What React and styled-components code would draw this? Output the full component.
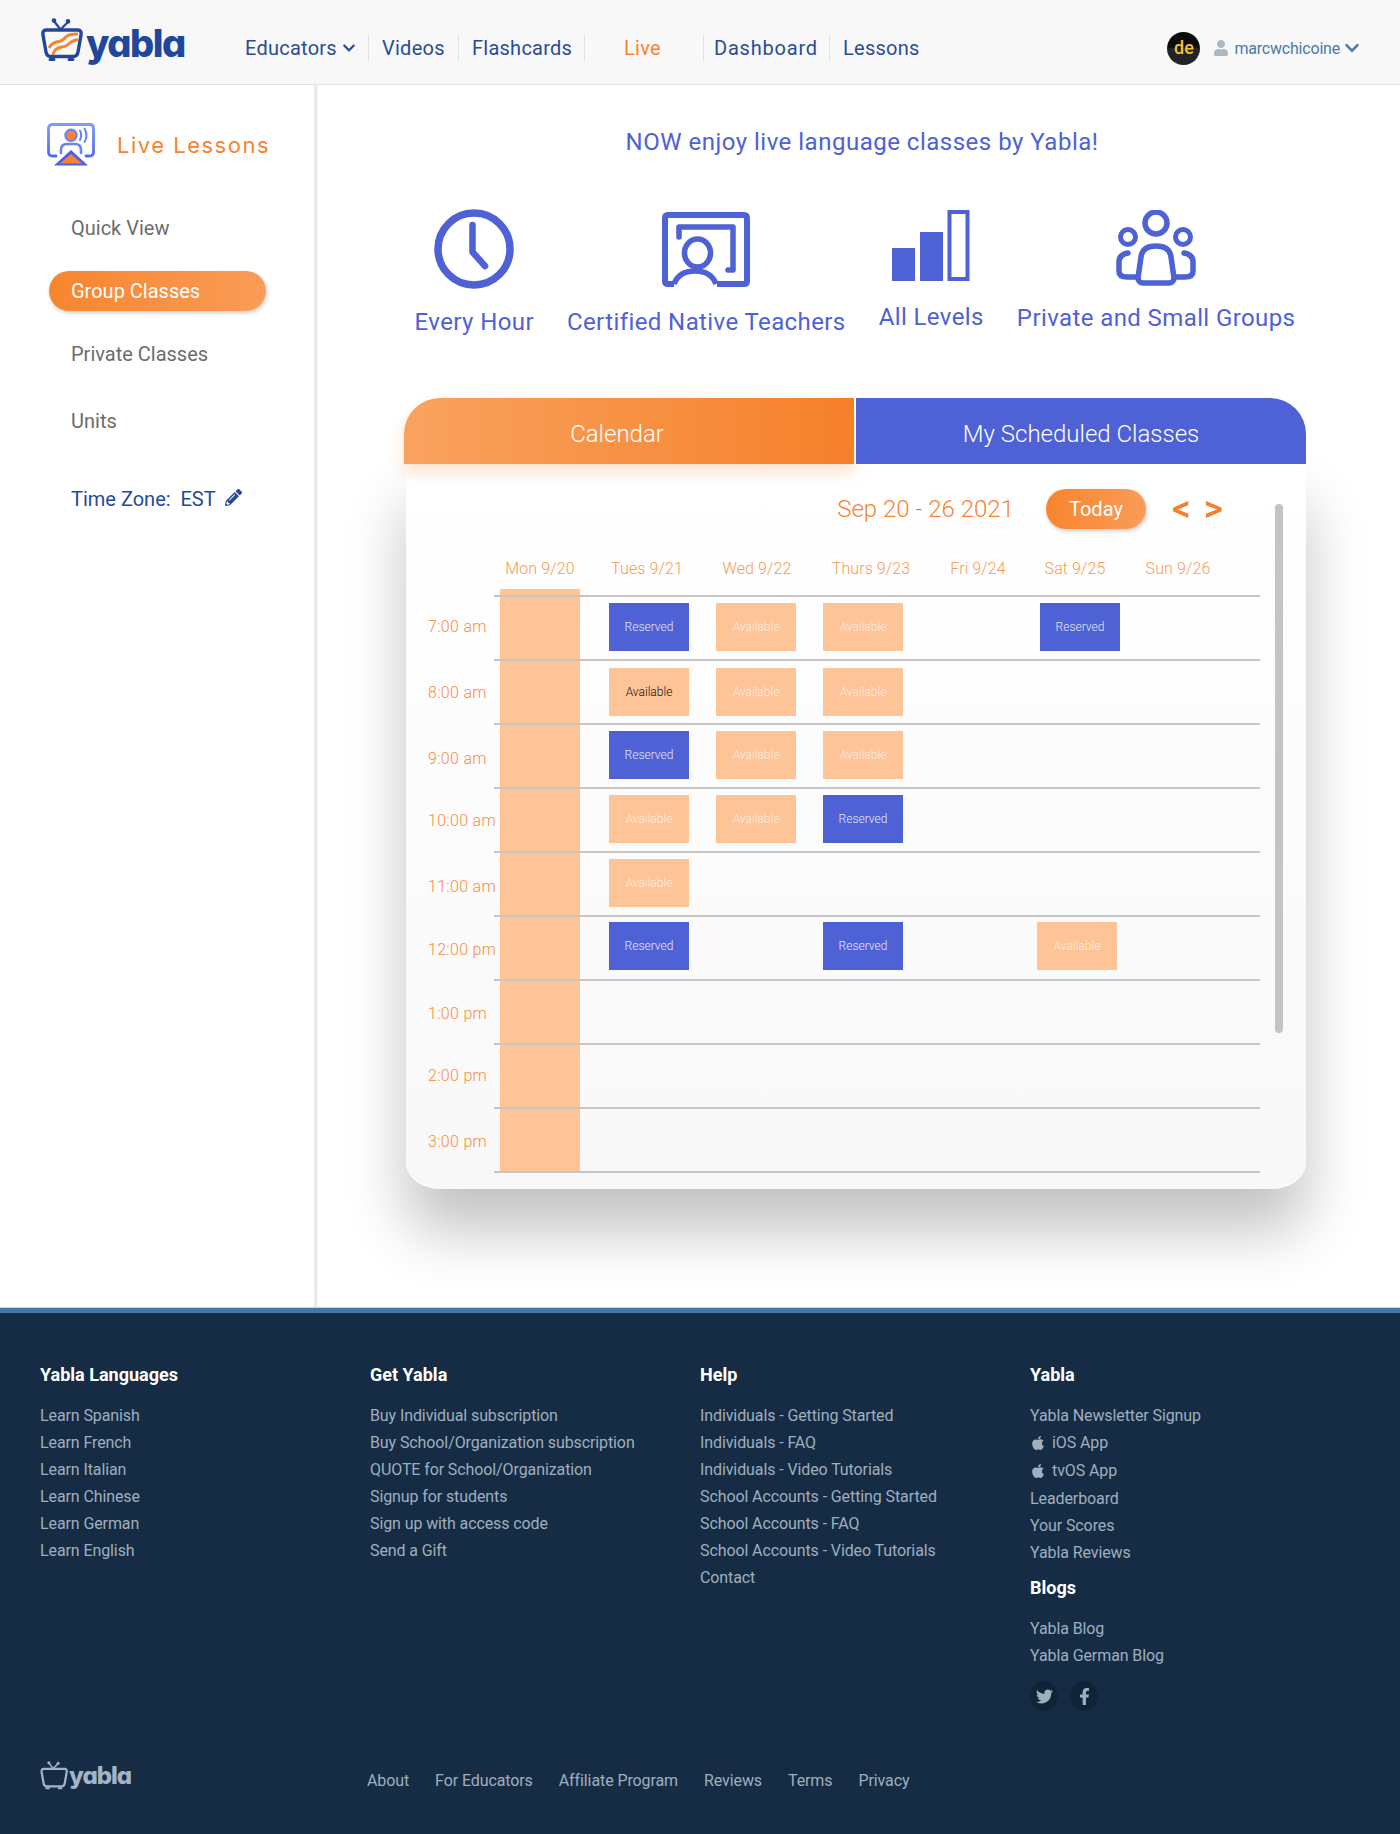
import React from 'react'
import styled, { createGlobalStyle } from 'styled-components'
import { FaApple, FaChevronDown, FaFacebookF, FaPencilAlt, FaTwitter, FaUser } from 'react-icons/fa'

const ORANGE = '#f98231'
const PEACH = '#fec397'
const INDIGO = '#4e61d5'
const NAVY = '#21479b'

const rows = [
    { time: '7:00 am', top: 20, cells: { tue: 'r', wed: 'a', thu: 'a', sat: 'r' } },
    { time: '8:00 am', top: 21, pad: 7, cells: { tue: 'k', wed: 'a', thu: 'a' } },
    { time: '9:00 am', top: 24, cells: { tue: 'r', wed: 'a', thu: 'a' } },
    { time: '10:00 am', top: 22, cells: { tue: 'a', wed: 'a', thu: 'r' } },
    { time: '11:00 am', top: 24, cells: { tue: 'a' } },
    { time: '12:00 pm', top: 24, pad: 5, cells: { tue: 'r', thu: 'r', sat: 'a' }, satShift: -3 },
    { time: '1:00 pm', top: 23, cells: {} },
    { time: '2:00 pm', top: 21, cells: {} },
    { time: '3:00 pm', top: 23, cells: {} },
]

const days = ['tue', 'wed', 'thu', 'fri', 'sat', 'sun']

const headers = [
    { label: 'Mon 9/20', w: 80 },
    { label: 'Tues 9/21', w: 134 },
    { label: 'Wed 9/22', w: 86 },
    { label: 'Thurs 9/23', w: 142 },
    { label: 'Fri 9/24', w: 72 },
    { label: 'Sat 9/25', w: 122 },
    { label: 'Sun 9/26', w: 84 },
]

const footerCols = [
    { title: 'Yabla Languages', links: ['Learn Spanish', 'Learn French', 'Learn Italian', 'Learn Chinese', 'Learn German', 'Learn English'] },
    { title: 'Get Yabla', links: ['Buy Individual subscription', 'Buy School/Organization subscription', 'QUOTE for School/Organization', 'Signup for students', 'Sign up with access code', 'Send a Gift'] },
    { title: 'Help', links: ['Individuals - Getting Started', 'Individuals - FAQ', 'Individuals - Video Tutorials', 'School Accounts - Getting Started', 'School Accounts - FAQ', 'School Accounts - Video Tutorials', 'Contact'] },
]

function TvIcon({ color, waves }) {
    return (
        <svg width="43" height="44" viewBox="0 0 43 44" fill="none">
            <path d="M19 11 L13 3 M20 11 L27 4" stroke={color} strokeWidth="2.2" strokeLinecap="round" />
            <circle cx="13" cy="2.6" r="2.3" fill={color} />
            <circle cx="27" cy="3.4" r="2.3" fill={color} />
            <path d="M5 12 H37 C39.5 12 40.5 14 40 17 L37 34 C36.5 37 35 38.5 32 38.5 H10 C7 38.5 5.5 37 5 34 L2 17 C1.5 14 2.5 12 5 12 Z" stroke={color} strokeWidth="3.4" />
            <path d="M9 41.5 H13 M28 41.5 H32" stroke={color} strokeWidth="3" strokeLinecap="round" />
            {waves && (
                <>
                    <path d="M8 30 C10 26 13 24 18 23.5 C23 23 24 18 28 17 C31 16.2 34 16 37 16" stroke={ORANGE} strokeWidth="3" />
                    <path d="M12 37 C13 32 16 29.5 21 29 C27 28.5 28 25 31 23.5 C33 22.5 35 22 37 21.5" stroke={ORANGE} strokeWidth="3" />
                </>
            )}
        </svg>
    )
}

function LiveIcon() {
    return (
        <svg width="48" height="44" viewBox="0 0 48 44" fill="none">
            <defs>
                <linearGradient id="liveBlue" x1="0" y1="0" x2="0" y2="1">
                    <stop offset="0" stopColor="#7f9bf5" />
                    <stop offset="1" stopColor="#4f6cf0" />
                </linearGradient>
            </defs>
            <path d="M9 33 H5.5 C2.8 33 1.5 31.5 1.5 29 V5.5 C1.5 2.8 2.8 1.5 5.5 1.5 H42.5 C45.2 1.5 46.5 2.8 46.5 5.5 V29 C46.5 31.5 45.2 33 42.5 33 H39" stroke="url(#liveBlue)" strokeWidth="2.8" strokeLinecap="round" />
            <circle cx="24" cy="12.3" r="5.6" fill={ORANGE} stroke="#6a84f0" strokeWidth="2.2" />
            <path d="M33 7.5 C34.5 10.5 34.5 14 33 17 M37.5 5.5 C40 10 40 15 37.5 19" stroke="#6a84f0" strokeWidth="2" strokeLinecap="round" />
            <path d="M14 30 V27 C14 23 16.5 21 20 21 H28 C31.5 21 34 23 34 27 V30" stroke="#6a84f0" strokeWidth="2.6" strokeLinecap="round" />
            <path d="M24 27 L41 42.5 H7 Z" fill="#4a5fe8" />
            <path d="M24 31 L35 40.5 H13 Z" fill={ORANGE} />
        </svg>
    )
}

function ClockIcon() {
    return (
        <FeatureSvg width="80" height="80" viewBox="0 0 80 80">
            <circle cx="40" cy="40" r="36" strokeWidth="7.5" />
            <path d="M38.5 16 V43 L51 57" strokeWidth="6.5" strokeLinecap="round" strokeLinejoin="round" />
        </FeatureSvg>
    )
}

function TeacherIcon() {
    return (
        <FeatureSvg width="88" height="75" viewBox="0 0 88 75">
            <path d="M12 72 H6 C4 72 3 71 3 69 V6 C3 4 4 3 6 3 H82 C84 3 85 4 85 6 V69 C85 71 84 72 82 72 H55" strokeWidth="6" />
            <path d="M17 25 V15 H71 V58 H66" strokeWidth="5.5" strokeLinecap="round" strokeLinejoin="round" />
            <ellipse cx="35.5" cy="41" rx="13" ry="14" strokeWidth="5.5" />
            <path d="M12 72 C15 64 22 59 33 59 C44 59 51 64 54 72" strokeWidth="5.5" />
        </FeatureSvg>
    )
}

function LevelsIcon() {
    return (
        <FeatureSvg width="78" height="71" viewBox="0 0 78 71">
            <rect x="0" y="38" width="23" height="33" fill={INDIGO} stroke="none" />
            <rect x="28" y="22" width="23" height="49" fill={INDIGO} stroke="none" />
            <rect x="57.5" y="2" width="18" height="67" strokeWidth="4" />
        </FeatureSvg>
    )
}

function GroupIcon() {
    return (
        <FeatureSvg width="80" height="76" viewBox="0 0 80 76">
            <circle cx="40" cy="13" r="11" strokeWidth="5.5" />
            <circle cx="12" cy="27" r="7.5" strokeWidth="5" />
            <circle cx="67" cy="27" r="7.5" strokeWidth="5" />
            <path d="M22 68 L25 47 C26 39 32 36 40 36 C48 36 54 39 55 47 L58 68 C58 71 56 73 53 73 H27 C24 73 22 71 22 68 Z" strokeWidth="5.5" strokeLinejoin="round" />
            <path d="M12 43 C6 44 3 47 3 52 V61 C3 65 6 67 11 67 H20 M68 43 C74 44 77 47 77 52 V61 C77 65 74 67 69 67 H60" strokeWidth="5.5" strokeLinecap="round" />
        </FeatureSvg>
    )
}

function App() {
    return (
        <Page>
            <GlobalStyle />
            <Header>
                <LogoWrap>
                    <TvIcon color={NAVY} waves />
                    <LogoText>yabla</LogoText>
                </LogoWrap>
                <Nav>
                    <NavItem $w={123}>Educators <Chevron><FaChevronDown /></Chevron></NavItem>
                    <NavItem $w={90} $sep>Videos</NavItem>
                    <NavItem $w={126} $sep>Flashcards</NavItem>
                    <NavItem $w={119} $sep $live>Live</NavItem>
                    <NavItem $w={126} $sep $wide>Dashboard</NavItem>
                    <NavItem $w={100} $sep>Lessons</NavItem>
                </Nav>
                <UserArea>
                    <Avatar>de</Avatar>
                    <UserName>
                        <UserGlyph><FaUser /></UserGlyph>
                        marcwchicoine
                        <UserChevron><FaChevronDown /></UserChevron>
                    </UserName>
                </UserArea>
            </Header>

            <Content>
                <Sidebar>
                    <SideTitle>
                        <LiveIcon />
                        <SideTitleText>Live Lessons</SideTitleText>
                    </SideTitle>
                    <SideLink $h={40}>Quick View</SideLink>
                    <SidePill>Group Classes</SidePill>
                    <SideLink $h={40} $mt={23}>Private Classes</SideLink>
                    <SideLink $h={40} $mt={27}>Units</SideLink>
                    <TimeZone>
                        Time Zone:&nbsp; EST <FaPencilAlt />
                    </TimeZone>
                </Sidebar>

                <Main>
                    <Title>NOW enjoy live language classes by Yabla!</Title>
                    <Features>
                        <Feature $top={0} $gap={19}>
                            <ClockIcon />
                            <FeatureLabel>Every Hour</FeatureLabel>
                        </Feature>
                        <Feature $top={3} $gap={21}>
                            <TeacherIcon />
                            <FeatureLabel>Certified Native Teachers</FeatureLabel>
                        </Feature>
                        <Feature $top={1} $gap={22}>
                            <LevelsIcon />
                            <FeatureLabel>All Levels</FeatureLabel>
                        </Feature>
                        <Feature $top={1} $gap={18}>
                            <GroupIcon />
                            <FeatureLabel>Private and Small Groups</FeatureLabel>
                        </Feature>
                    </Features>

                    <Card>
                        <Tabs>
                            <CalendarTab>Calendar</CalendarTab>
                            <ScheduledTab>My Scheduled Classes</ScheduledTab>
                        </Tabs>
                        <CardBody>
                            <Scrollbar />
                            <Toolbar>
                                <DateRange>Sep 20 - 26 2021</DateRange>
                                <TodayButton>Today</TodayButton>
                                <Arrows>
                                    <span>&lt;</span>
                                    <span>&gt;</span>
                                </Arrows>
                            </Toolbar>
                            <DayHeaders>
                                {headers.map((h) => (
                                    <DayHeader key={h.label} $w={h.w}>{h.label}</DayHeader>
                                ))}
                            </DayHeaders>
                            <Schedule>
                                <MondayBlock />
                                <TopLine />
                                {rows.map((row) => (
                                    <Row key={row.time} $pad={row.pad || 6}>
                                        <TimeLabel $top={row.top}>{row.time}</TimeLabel>
                                        <span />
                                        {days.map((d) => {
                                            const kind = row.cells[d]
                                            if (!kind) return <span key={d} />
                                            return (
                                                <Slot key={d} $kind={kind} $shift={d === 'sat' ? row.satShift || 0 : 0}>
                                                    {kind === 'r' ? 'Reserved' : 'Available'}
                                                </Slot>
                                            )
                                        })}
                                    </Row>
                                ))}
                            </Schedule>
                        </CardBody>
                    </Card>
                </Main>
            </Content>

            <Footer>
                <FooterColumns>
                    {footerCols.map((col) => (
                        <FooterCol key={col.title}>
                            <FooterHeading>{col.title}</FooterHeading>
                            {col.links.map((l) => (
                                <FooterLink key={l}>{l}</FooterLink>
                            ))}
                        </FooterCol>
                    ))}
                    <FooterCol>
                        <FooterHeading>Yabla</FooterHeading>
                        <FooterLink>Yabla Newsletter Signup</FooterLink>
                        <AppLink><FaApple /> iOS App</AppLink>
                        <AppLink><FaApple /> tvOS App</AppLink>
                        <FooterLink>Leaderboard</FooterLink>
                        <FooterLink>Your Scores</FooterLink>
                        <FooterLink>Yabla Reviews</FooterLink>
                        <FooterHeading $mt={11}>Blogs</FooterHeading>
                        <FooterLink>Yabla Blog</FooterLink>
                        <FooterLink>Yabla German Blog</FooterLink>
                        <Socials>
                            <Social><FaTwitter /></Social>
                            <Social><FaFacebookF /></Social>
                        </Socials>
                    </FooterCol>
                </FooterColumns>
                <FooterBottom>
                    <FooterLogo>
                        <TvIcon color="#a3b4c6" />
                        <FooterLogoText>yabla</FooterLogoText>
                    </FooterLogo>
                    <BottomLinks>
                        <FooterLink>About</FooterLink>
                        <FooterLink>For Educators</FooterLink>
                        <FooterLink>Affiliate Program</FooterLink>
                        <FooterLink>Reviews</FooterLink>
                        <FooterLink>Terms</FooterLink>
                        <FooterLink>Privacy</FooterLink>
                    </BottomLinks>
                </FooterBottom>
            </Footer>
        </Page>
    )
}

export default App

const GlobalStyle = createGlobalStyle`
    body {
        margin: 0;
        background: #fff;
        font-family: Roboto, "Liberation Sans", sans-serif;
    }
`

const Page = styled.div`
    width: 1400px;
    height: 1834px;
    overflow: hidden;
    display: flex;
    flex-direction: column;
`

const Header = styled.header`
    height: 84px;
    flex-shrink: 0;
    background: #f8f8f8;
    border-bottom: 1px solid #e2e5e9;
    display: flex;
    align-items: center;
    padding-left: 41px;
`

const LogoWrap = styled.div`
    width: 204px;
    display: flex;
    align-items: flex-end;
    height: 44px;
    gap: 2px;
    margin-top: -4px;
`

const LogoText = styled.span`
    font-family: Inter, Lato, sans-serif;
    font-feature-settings: 'cv11';
    font-weight: 800;
    font-size: 38px;
    line-height: 38px;
    letter-spacing: -1.5px;
    color: ${NAVY};
`

const Nav = styled.nav`
    display: flex;
    align-items: center;
    flex: 1;
    padding-top: 12px;
`

const NavItem = styled.div`
    width: ${(p) => p.$w}px;
    height: 26px;
    line-height: 26px;
    font-size: 20px;
    letter-spacing: ${(p) => (p.$wide ? 0.8 : 0.25)}px;
    color: ${(p) => (p.$live ? ORANGE : '#2b4c94')};
    box-sizing: border-box;
    white-space: nowrap;
    padding-left: ${(p) => (p.$live ? 39 : p.$wide ? 10 : p.$sep ? 13 : 0)}px;
    border-left: ${(p) => (p.$sep ? '1px solid #e2e2e2' : 'none')};
`

const Chevron = styled.span`
    font-size: 14px;
    color: #2b4c94;
`

const UserArea = styled.div`
    display: flex;
    align-items: center;
    padding: 12px 40px 0 0;
    gap: 13px;
`

const Avatar = styled.div`
    width: 33px;
    height: 33px;
    border-radius: 50%;
    background: linear-gradient(#0c0c0c 50%, #232323 50%);
    color: #f3c033;
    font-size: 18px;
    font-weight: 500;
    text-align: center;
    line-height: 32px;
`

const UserName = styled.div`
    display: flex;
    align-items: center;
    font-size: 16px;
    letter-spacing: -0.2px;
    color: #4a79ae;
`

const UserGlyph = styled.span`
    color: #a9b9c6;
    font-size: 16px;
    display: flex;
    margin-right: 5px;
`

const UserChevron = styled.span`
    color: #4a79ae;
    font-size: 16px;
    display: flex;
    margin-left: 4px;
`

const Content = styled.div`
    height: 1222px;
    flex-shrink: 0;
    display: flex;
`

const Sidebar = styled.aside`
    width: 314px;
    flex-shrink: 0;
    border-right: 3px solid #eaeaea;
    padding-top: 38px;
    box-shadow: 1px 0 2px rgba(0, 0, 0, 0.04);
`

const SideTitle = styled.div`
    display: flex;
    align-items: center;
    gap: 22px;
    padding-left: 47px;
    height: 44px;
    margin-bottom: 41px;
`

const SideTitleText = styled.span`
    font-family: Inter, Roboto, sans-serif;
    font-size: 22px;
    letter-spacing: 1.5px;
    color: ${ORANGE};
`

const SideLink = styled.div`
    height: ${(p) => p.$h}px;
    line-height: ${(p) => p.$h}px;
    margin-top: ${(p) => p.$mt || 0}px;
    padding-left: 71px;
    font-size: 20px;
    color: #6c6c6c;
`

const SidePill = styled.div`
    width: 217px;
    height: 40px;
    line-height: 40px;
    box-sizing: border-box;
    margin: 23px 0 0 49px;
    padding-left: 22px;
    border-radius: 20px;
    font-size: 20px;
    color: #fff;
    background: linear-gradient(90deg, #f7852e, #fa9c58);
    box-shadow: 1px 2px 4px rgba(0, 0, 0, 0.2);
`

const TimeZone = styled.div`
    margin-top: 38px;
    padding-left: 71px;
    height: 40px;
    line-height: 40px;
    font-size: 20px;
    color: #254a99;
    svg {
        font-size: 17px;
        margin-left: 5px;
    }
`

const Main = styled.main`
    flex: 1;
    padding-top: 43px;
    padding-right: 7px;
    display: flex;
    flex-direction: column;
    align-items: center;
`

const Title = styled.h1`
    margin: 0;
    padding-left: 14px;
    font-weight: 400;
    font-size: 24px;
    line-height: 28px;
    letter-spacing: 0.5px;
    color: ${INDIGO};
`

const Features = styled.div`
    display: flex;
    align-items: flex-start;
    gap: 33px;
    margin-top: 53px;
    height: 127px;
`

const Feature = styled.div`
    display: flex;
    flex-direction: column;
    align-items: center;
    margin-top: ${(p) => p.$top}px;
    gap: ${(p) => p.$gap}px;
`

const FeatureSvg = styled.svg`
    display: block;
    fill: none;
    stroke: ${INDIGO};
`

const FeatureLabel = styled.div`
    font-size: 24px;
    line-height: 28px;
    letter-spacing: 0.4px;
    color: ${INDIGO};
    white-space: nowrap;
`

const Card = styled.section`
    width: 902px;
    margin-top: 62px;
`

const Tabs = styled.div`
    display: flex;
    gap: 2px;
    position: relative;
    z-index: 1;
`

const CalendarTab = styled.div`
    width: 450px;
    height: 66px;
    line-height: 72px;
    box-sizing: border-box;
    padding-right: 24px;
    text-align: center;
    font-size: 24px;
    font-weight: 300;
    color: #fff;
    border-radius: 36px 0 0 0;
    background: linear-gradient(90deg, #f9a25f, #f6802a);
    box-shadow: 0 8px 16px rgba(249, 130, 48, 0.25);
`

const ScheduledTab = styled.div`
    width: 450px;
    height: 66px;
    line-height: 72px;
    text-align: center;
    font-size: 24px;
    font-weight: 300;
    color: #fff;
    border-radius: 0 36px 0 0;
    background: ${INDIGO};
`

const CardBody = styled.div`
    position: relative;
    width: 900px;
    height: 725px;
    margin-left: 2px;
    box-sizing: border-box;
    padding-top: 25px;
    border-radius: 0 0 35px 35px / 0 0 26px 26px;
    background: linear-gradient(#ffffff, #f8f8f8);
    box-shadow: 0 42px 60px rgba(0, 0, 0, 0.24);
`

const Scrollbar = styled.div`
    position: absolute;
    left: 869px;
    top: 40px;
    width: 8px;
    height: 529px;
    border-radius: 4px;
    background: #c4c4c4;
`

const Toolbar = styled.div`
    display: flex;
    align-items: center;
    justify-content: flex-end;
    height: 40px;
    padding-right: 83px;
`

const DateRange = styled.div`
    font-size: 24px;
    font-weight: 300;
    color: ${ORANGE};
    margin-right: 32px;
`

const TodayButton = styled.div`
    width: 100px;
    height: 40px;
    line-height: 40px;
    text-align: center;
    border-radius: 20px;
    font-size: 20px;
    color: #fff;
    background: linear-gradient(90deg, #f7852e, #fa9c58);
    box-shadow: 1px 2px 4px rgba(0, 0, 0, 0.2);
    margin-right: 26px;
`

const Arrows = styled.div`
    display: flex;
    gap: 13px;
    font-size: 37px;
    font-weight: 500;
    line-height: 40px;
    color: #f6802a;
`

const DayHeaders = styled.div`
    display: flex;
    margin-top: 30px;
    padding-left: 94px;
`

const DayHeader = styled.div`
    width: ${(p) => p.$w}px;
    text-align: center;
    font-size: 16px;
    font-weight: 300;
    line-height: 20px;
    letter-spacing: 0.1px;
    color: #f89a56;
    white-space: nowrap;
`

const Schedule = styled.div`
    position: relative;
    margin: 16px 0 0 22px;
`

const MondayBlock = styled.div`
    position: absolute;
    left: 72px;
    top: -6px;
    width: 80px;
    height: 583px;
    background: ${PEACH};
`

const TopLine = styled.div`
    position: relative;
    width: 766px;
    height: 2px;
    margin-left: 66px;
    background: #c6c6c6;
`

const Row = styled.div`
    position: relative;
    height: 64px;
    box-sizing: border-box;
    padding-top: ${(p) => p.$pad}px;
    display: grid;
    grid-template-columns: 72px 109px 107px 107px 107px 110px 107px 107px;
    align-items: start;
    &::after {
        content: '';
        position: absolute;
        left: 66px;
        bottom: 0;
        width: 766px;
        height: 2px;
        background: #c6c6c6;
    }
`

const TimeLabel = styled.div`
    margin-top: ${(p) => p.$top - 6}px;
    font-size: 16px;
    font-weight: 300;
    line-height: 20px;
    letter-spacing: 0.3px;
    color: #f98d3f;
    white-space: nowrap;
`

const Slot = styled.div`
    width: 80px;
    height: 48px;
    line-height: 49px;
    text-align: center;
    font-size: 12px;
    font-weight: 300;
    margin-left: ${(p) => p.$shift}px;
    background: ${(p) => (p.$kind === 'r' ? INDIGO : PEACH)};
    color: ${(p) => (p.$kind === 'r' ? '#e6e9fb' : p.$kind === 'k' ? '#111' : 'rgba(255, 255, 255, 0.75)')};
`

const Footer = styled.footer`
    flex: 1;
    background: #162c45;
    border-top: 1px solid #c5d6e4;
    box-shadow: inset 0 5px 0 #4478a8;
    padding: 56px 0 0 40px;
`

const FooterColumns = styled.div`
    display: grid;
    grid-template-columns: repeat(4, 330px);
    height: 399px;
`

const FooterCol = styled.div`
    display: flex;
    flex-direction: column;
`

const FooterHeading = styled.div`
    margin-top: ${(p) => p.$mt || 0}px;
    margin-bottom: 16px;
    font-size: 18px;
    font-weight: 700;
    line-height: 22px;
    color: #fff;
`

const FooterLink = styled.div`
    font-size: 16px;
    line-height: 27px;
    letter-spacing: -0.1px;
    color: #9fafbd;
    white-space: nowrap;
`

const AppLink = styled.div`
    height: 28px;
    line-height: 28px;
    font-size: 16px;
    letter-spacing: -0.1px;
    color: #9fafbd;
    display: flex;
    align-items: center;
    gap: 6px;
    svg {
        font-size: 16px;
    }
`

const Socials = styled.div`
    display: flex;
    gap: 12px;
    margin-top: 12px;
`

const Social = styled.div`
    width: 28px;
    height: 30px;
    border-radius: 50%;
    background: #102438;
    color: #9fafbd;
    display: flex;
    align-items: center;
    justify-content: center;
    font-size: 17px;
`

const FooterBottom = styled.div`
    display: flex;
    align-items: flex-start;
`

const FooterLogo = styled.div`
    width: 327px;
    height: 30px;
    margin-top: -2px;
    display: flex;
    align-items: flex-start;
    svg {
        width: 29px;
        height: 29px;
    }
`

const FooterLogoText = styled.span`
    font-family: Inter, Lato, sans-serif;
    font-feature-settings: 'cv11';
    font-weight: 800;
    font-size: 24px;
    line-height: 30px;
    letter-spacing: -1px;
    color: #a3b4c6;
`

const BottomLinks = styled.div`
    display: flex;
    gap: 26px;
    margin-top: 4px;
`
